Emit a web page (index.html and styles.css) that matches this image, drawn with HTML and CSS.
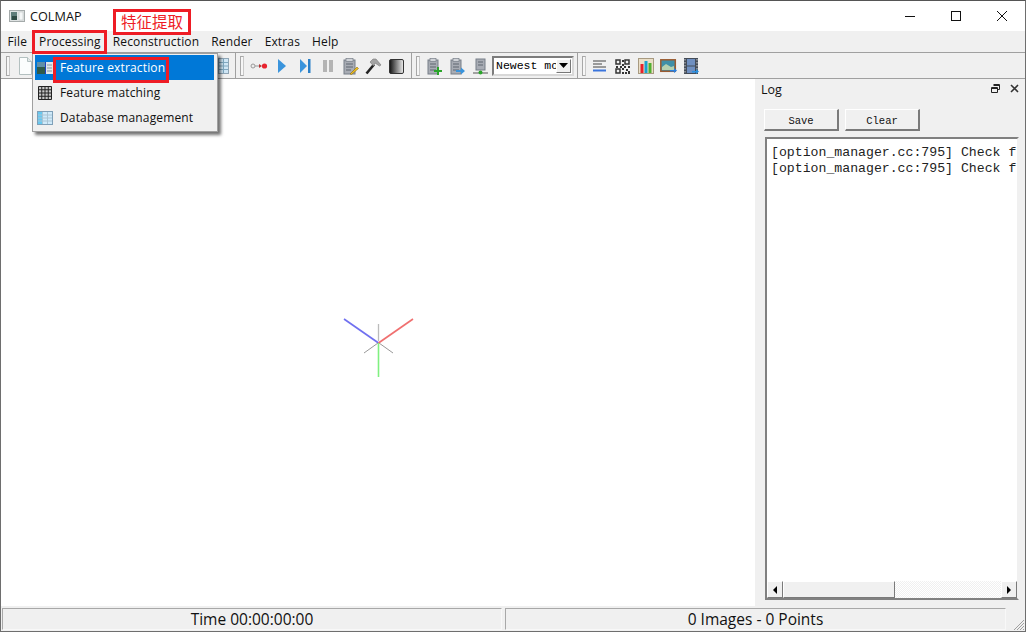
FILE: index.html
```html
<!DOCTYPE html>
<html lang="en">
<head>
<meta charset="utf-8">
<title>COLMAP</title>
<link rel="stylesheet" href="styles.css">
</head>
<body>
<div class="window">
  <header class="titlebar">
    <svg class="app-icon" width="16" height="12" viewBox="0 0 16 12"><rect x="0.500" y="0.500" width="15" height="11" fill="#dfe3e3" stroke="#a4aaaa"/><rect x="2" y="2" width="6" height="8" fill="#5f7d7a"/><rect x="3" y="6" width="5" height="4" fill="#2f4a44"/><rect x="10" y="2" width="4" height="8" fill="#f4f6f6" stroke="#b7bcbc" stroke-width="0.500"/></svg>
    <span class="app-name">COLMAP</span>
    <div class="win-controls">
      <svg width="46" height="31" viewBox="0 0 46 31"><path d="M18 15.500h10" stroke="#111" fill="none"/></svg>
      <svg width="46" height="31" viewBox="0 0 46 31"><rect x="18.500" y="10.500" width="9" height="9" stroke="#111" fill="none"/></svg>
      <svg width="46" height="31" viewBox="0 0 46 31"><path d="M18 10l10 10M28 10l-10 10" stroke="#111" fill="none"/></svg>
    </div>
  </header>
  <nav class="menubar">
    <span class="menu-item">File</span>
    <span class="menu-item">Processing</span>
    <span class="menu-item">Reconstruction</span>
    <span class="menu-item">Render</span>
    <span class="menu-item">Extras</span>
    <span class="menu-item">Help</span>
  </nav>
  <div class="toolbar">
    <i class="handle first"></i>
    <span class="tool"><svg width="14" height="18" viewBox="0 0 14 18"><path d="M1.500.5h8l4 4v13h-12z" fill="#fbfdfd" stroke="#b3c0c0"/><path d="M9.500.5v4h4" fill="#e2e8e8" stroke="#b3c0c0"/></svg></span>
    <span class="hidden-tools"></span>
    <span class="tool"><svg width="16" height="16" viewBox="0 0 16 16"><rect x=".5" y=".5" width="15" height="15" fill="#cfe6f5" stroke="#8fa5b5"/><path d="M1 4.500h14M1 8h14M1 11.500h14M5.500 1v14M10.500 1v14" stroke="#7fa8c0"/></svg></span>
    <i class="sep"></i><i class="handle"></i>
    <span class="tool"><svg width="18" height="8" viewBox="0 0 18 8"><circle cx="3" cy="4" r="2" fill="#eee" stroke="#999"/><path d="M5 4h5" stroke="#999"/><path d="M9 2l3 2-3 2z" fill="#b33"/><circle cx="14.500" cy="4" r="2.600" fill="#e8232e"/></svg></span>
    <span class="tool"><svg width="10" height="14" viewBox="0 0 10 14"><path d="M1 0l8 7-8 7z" fill="#3a94dc"/></svg></span>
    <span class="tool"><svg width="12" height="14" viewBox="0 0 12 14"><path d="M1 0l7 7-7 7z" fill="#3a94dc"/><rect x="9" y="0" width="2.500" height="14" fill="#2a80c8"/></svg></span>
    <span class="tool"><svg width="10" height="12" viewBox="0 0 10 12"><rect width="4" height="12" fill="#b4b4b4"/><rect x="6" width="4" height="12" fill="#b4b4b4"/></svg></span>
    <span class="tool"><svg width="16" height="17" viewBox="0 0 16 17"><rect x="1" y="2" width="11" height="14" fill="#a8acb4" stroke="#777e88"/><rect x="3" y="0.500" width="7" height="3" fill="#d0d3d8" stroke="#777e88" stroke-width=".7"/><path d="M3 6h7M3 9h7M3 12h5" stroke="#5f6670"/><path d="M7 16l7-7 1.500 1.500-7 6z" fill="#f0c020" stroke="#7a5a00" stroke-width=".5"/></svg></span>
    <span class="tool"><svg width="17" height="17" viewBox="0 0 17 17"><path d="M1.500 15.500L9 6.500" stroke="#222" stroke-width="2.600"/><path d="M5 4l3-3h3l5 6-1.500 1L10 5 8.500 8z" fill="#a4a4a4" stroke="#777" stroke-width=".6"/></svg></span>
    <span class="tool"><svg width="15" height="15" viewBox="0 0 15 15"><defs><linearGradient id="g"><stop offset="0" stop-color="#111"/><stop offset="1" stop-color="#eee"/></linearGradient></defs><rect x=".5" y=".5" width="14" height="14" rx="1.500" fill="url(#g)" stroke="#333"/></svg></span>
    <i class="sep"></i><i class="handle"></i>
    <span class="tool"><svg width="15" height="17" viewBox="0 0 15 17"><rect x="1" y="2" width="10" height="14" fill="#a8acb4" stroke="#777e88"/><rect x="3" y="0.500" width="6" height="3" fill="#d0d3d8" stroke="#777e88" stroke-width=".7"/><path d="M3 6h6M3 9h6M3 12h6" stroke="#5f6670"/><path d="M10 9h2v3h3v2h-3v3h-2v-3H7v-2h3z" fill="#2aa52a"/></svg></span>
    <span class="tool"><svg width="15" height="17" viewBox="0 0 15 17"><rect x="1" y="2" width="10" height="14" fill="#a8acb4" stroke="#777e88"/><rect x="3" y="0.500" width="6" height="3" fill="#d0d3d8" stroke="#777e88" stroke-width=".7"/><path d="M3 6h6M3 9h6M3 12h6" stroke="#5f6670"/><path d="M6 12h5V9.500l4 3.500-4 3.500V14H6z" fill="#3a94dc"/></svg></span>
    <span class="tool"><svg width="15" height="17" viewBox="0 0 15 17"><rect x="3" y="1" width="9" height="11" fill="#a8acb4" stroke="#777e88"/><path d="M5 4h5M5 7h5" stroke="#5f6670"/><path d="M0 15h15" stroke="#555"/><circle cx="7.500" cy="14.500" r="2" fill="#2aa52a"/></svg></span>
    <span class="combo"><span class="combo-text">Newest mo</span><span class="combo-btn"><svg width="9" height="5" viewBox="0 0 9 5"><path d="M0 0h9L4.500 5z" fill="#000"/></svg></span></span>
    <i class="sep"></i><i class="handle tight"></i>
    <span class="tool"><svg width="13" height="12" viewBox="0 0 13 12"><path d="M0 1h13M0 4h9M0 7h13" stroke="#444"/><path d="M0 10.500h13" stroke="#3a74dc" stroke-width="2"/></svg></span>
    <span class="tool"><svg width="15" height="15" viewBox="0 0 15 15"><path d="M1 1h4v4H1zM10 1h4v4h-4zM1 10h4v4H1z" fill="none" stroke="#333" stroke-width="1.500"/><path d="M7 1h2v2H7zM7 5h2v2H7zM1 7h2v2H1zM5 7h2v2H5zM9 7h2v2H9zM13 7h2v2h-2zM7 9h2v2H7zM11 10h2v2h-2zM7 13h2v2H7zM10 13h2v2h-2zM13 12h2v3h-2z" fill="#333"/></svg></span>
    <span class="tool"><svg width="16" height="16" viewBox="0 0 16 16"><rect x=".5" y=".5" width="15" height="15" fill="#eadfc8" stroke="#a89a80"/><rect x="2.500" y="6" width="3" height="9" fill="#e8202a"/><rect x="6.500" y="3" width="3" height="12" fill="#18a0d0"/><rect x="10.500" y="5" width="3" height="10" fill="#50b030"/></svg></span>
    <span class="tool"><svg width="17" height="14" viewBox="0 0 17 14"><rect x=".8" y=".8" width="14.500" height="11.500" fill="#3f8fa8" stroke="#9a5a30" stroke-width="1.500"/><path d="M2 8l4-3 5 3 3-1v4H2z" fill="#b5d0b0"/><path d="M10 11h4V9l3 2.500-3 2.500v-1.500h-4z" fill="#2a80e0"/></svg></span>
    <span class="tool"><svg width="15" height="17" viewBox="0 0 15 17"><rect x="0" y="0" width="14" height="16" fill="#444c58"/><rect x="3" y="1" width="8" height="6.500" fill="#6f8fc0"/><rect x="3" y="8.500" width="8" height="6.500" fill="#6f8fc0"/><path d="M1 1v14M13 1v14" stroke="#ccc" stroke-dasharray="1.500 1.500"/><path d="M8 13h4v-2l3 2.500-3 2.500v-1.500H8z" fill="#2a90e0"/></svg></span>
  </div>
  <main class="workspace">
    <section class="canvas">
      <svg class="axes" width="72" height="62" viewBox="0 0 72 62">
        <path d="M36.500 9v17" stroke="#bbb" stroke-width="1.300" fill="none"/>
        <path d="M36 28L22 38M37 28l14 10" stroke="#999" stroke-width="1" fill="none"/>
        <path d="M2 4l34.500 24" stroke="#7070f0" stroke-width="1.600" fill="none"/>
        <path d="M71 4L36.500 28" stroke="#f07070" stroke-width="1.600" fill="none"/>
        <path d="M36.500 28v34" stroke="#80f080" stroke-width="1.600" fill="none"/>
      </svg>
    </section>
    <aside class="dock">
      <div class="dock-head">
        <span class="dock-title">Log</span>
        <svg class="dock-float" width="9" height="9" viewBox="0 0 9 9"><path d="M2.500.5h6v5h-2M.5 3.500h6v5h-6z" fill="#f0f0f0" stroke="#222"/><path d="M2.500 1.500h6M.5 4.500h6" stroke="#222"/></svg>
        <svg class="dock-close" width="9" height="9" viewBox="0 0 9 9"><path d="M1 1l7 7M8 1L1 8" stroke="#333" stroke-width="1.600"/></svg>
      </div>
      <div class="dock-actions">
        <span class="btn">Save</span>
        <span class="btn">Clear</span>
      </div>
      <div class="logbox">
        <div class="logtext">
          <div>[option_manager.cc:795] Check f</div>
          <div>[option_manager.cc:795] Check f</div>
        </div>
        <div class="hscroll">
          <span class="arrow"><svg width="4" height="8" viewBox="0 0 4 8"><path d="M4 0v8L0 4z" fill="#000"/></svg></span>
          <span class="thumb"></span>
          <span class="track"></span>
          <span class="arrow"><svg width="4" height="8" viewBox="0 0 4 8"><path d="M0 0v8l4-4z" fill="#000"/></svg></span>
        </div>
      </div>
    </aside>
  </main>
  <footer class="statusbar">
    <div class="cell time">Time 00:00:00:00</div>
    <div class="cell stats">0 Images - 0 Points</div>
    <svg class="grip" width="14" height="14" viewBox="0 0 14 14"><path d="M13 3L3 13M13 6l-7 7M13 9l-4 4M13 12l-1 1" stroke="#a0a0a0"/></svg>
  </footer>

  <div class="dropdown">
    <div class="dd-item active"><svg width="16" height="12" viewBox="0 0 16 12"><rect width="16" height="12" fill="#dfe6ea"/><rect x="0" y="0" width="8" height="5" fill="#5f8fa8"/><rect x="0" y="5" width="8" height="7" fill="#2f5a4a"/><path d="M10 3h5M10 6h5M10 9h5" stroke="#8a9aa0"/><path d="M8.500 0v12" stroke="#2040c0"/></svg><span>Feature extraction</span></div>
    <div class="dd-item"><svg width="14" height="14" viewBox="0 0 14 14"><path d="M.5.5h13v13H.5zM.5 3.750h13M.5 7h13M.5 10.250h13M3.750.5v13M7 .5v13M10.250.5v13" fill="#c8c8c8" stroke="#222"/></svg><span>Feature matching</span></div>
    <div class="dd-item"><svg width="16" height="14" viewBox="0 0 16 14"><rect x=".5" y=".5" width="15" height="13" fill="#cfeafa" stroke="#7fa0b8"/><rect x="1" y="1" width="4" height="12" fill="#66c8f0"/><path d="M1 4h14M1 7h14M1 10h14M5.500 1v12M10.500 1v12" stroke="#a9c4d4"/></svg><span>Database management</span></div>
  </div>
  <div class="mark mark-menu"></div>
  <div class="mark mark-item"></div>
  <div class="mark mark-label">特征提取</div>
</div>
</body>
</html>
```
FILE: styles.css
```css
* { box-sizing: border-box; }
html, body { margin: 0; height: 100%; overflow: hidden; }
body { font-family: "Open Sans", "Noto Sans", sans-serif; font-size: 12px; color: #111; }

.window {
  position: relative;
  width: 1026px;
  height: 632px;
  display: flex;
  flex-direction: column;
  background: #f0f0f0;
  border: 1px solid #6e6e6e;
  border-top-color: #555;
}

.titlebar {
  height: 30px;
  flex: none;
  display: flex;
  align-items: center;
  background: #fff;
  padding-left: 8px;
}
.app-icon { margin-right: 5px; }
.app-name { font-size: 12.700px; padding-bottom: 1px; }
.win-controls { margin-left: auto; display: flex; }

.menubar {
  height: 22px;
  flex: none;
  display: flex;
  align-items: center;
  padding: 1px 0 0 .5px;
  background: #f0f0f0;
  border-bottom: 1px solid #a0a0a0;
}
.menu-item { padding: 0 6px; font-size: 12px; line-height: 20px; letter-spacing: .15px; }

.toolbar {
  height: 26px;
  flex: none;
  display: flex;
  align-items: center;
  padding: 1px 0 0 5px;
  background: #f0f0f0;
  border-bottom: 1px solid #a0a0a0;
}
.handle {
  flex: none;
  width: 4px;
  height: 20px;
  border: 1px solid #a8a8a8;
  border-right-color: #c8c8c8;
  background: #f6f6f6;
  margin-right: 3px;
}
.handle.tight { margin-right: 2px; }
.sep { flex: none; width: 1px; height: 25px; margin: -1px 4px 0 3px; background: #a0a0a0; }
.tool { flex: none; width: 23px; display: flex; justify-content: center; align-items: center; height: 24px; }
.hidden-tools { flex: none; width: 173px; }
.combo {
  flex: none;
  width: 82px;
  height: 20px;
  margin-top: -1px;
  display: flex;
  align-items: center;
  background: #fff;
  border: 2px solid #7c7c7c;
  border-right-color: #d8d8d8;
  border-bottom-color: #d8d8d8;
}
.combo-text {
  flex: none;
  width: 62px;
  overflow: hidden;
  white-space: nowrap;
  font: 11.500px "Liberation Mono", monospace;
  padding-left: 2px;
  color: #000;
}
.combo-btn {
  flex: none;
  width: 15px;
  height: 14px;
  display: flex;
  align-items: center;
  justify-content: center;
  background: #f0f0f0;
  border: 1px solid #777;
  border-top-color: #fff;
  border-left-color: #fff;
}

.workspace { flex: 1; min-height: 0; display: flex; }
.canvas {
  flex: 1;
  background: #fff;
  display: flex;
  justify-content: flex-start;
  align-items: flex-start;
  padding: 236px 0 0 340.500px;
}
.dock {
  flex: none;
  width: 270px;
  display: flex;
  flex-direction: column;
  padding: 0 6px 6px 9px;
  background: #f0f0f0;
}
.dock-head {
  height: 30px;
  flex: none;
  display: flex;
  align-items: flex-start;
  padding-top: 2px;
  font-size: 12.500px;
  margin: 0 -3px;
}
.dock-title { flex: 1; }
.dock-float { margin: 3px 10px 0 0; }
.dock-close { margin: 3px 3px 0 0; }
.dock-actions { flex: none; display: flex; gap: 6px; margin-bottom: 6px; }
.btn {
  width: 75px;
  height: 22px;
  display: flex;
  align-items: center;
  justify-content: center;
  padding-top: 3px;
  font: 10.500px "Liberation Mono", monospace;
  background: #f0f0f0;
  border: 1px solid #fff;
  border-right: 2px solid #7a7a7a;
  border-bottom: 2px solid #7a7a7a;
}
.logbox {
  flex: 1;
  min-height: 0;
  display: flex;
  flex-direction: column;
  background: #fff;
  border: 2px solid #808080;
  border-right-color: #f0f0f0;
  border-bottom-color: #808080;
  margin-left: 1px;
}
.logtext {
  flex: 1;
  overflow: hidden;
  white-space: nowrap;
  padding: 6px 0 0 4px;
  font: 13.200px/16px "Liberation Mono", monospace;
  color: #222;
}
.hscroll { flex: none; height: 17px; display: flex; background: #f4f4f4; }
.arrow {
  flex: none;
  width: 16px;
  display: flex;
  align-items: center;
  justify-content: center;
  background: #f0f0f0;
  border: 1px solid #fff;
  border-right-color: #7a7a7a;
  border-bottom-color: #7a7a7a;
}
.thumb {
  flex: none;
  width: 112px;
  background: #f0f0f0;
  border: 1px solid #fff;
  border-right-color: #7a7a7a;
  border-bottom-color: #7a7a7a;
}
.track { flex: 1; background: repeating-conic-gradient(#f0f0f0 0 25%, #fff 0 50%) 0 0 / 2px 2px; }

.statusbar {
  height: 25px;
  flex: none;
  display: flex;
  gap: 3px;
  padding: 2px 0 1px 1px;
  background: #f0f0f0;
  position: relative;
}
.cell {
  display: flex;
  align-items: center;
  justify-content: center;
  font-size: 15.500px;
  border: 1px solid #a8a8a8;
  border-right-color: #f8f8f8;
  border-bottom-color: #f8f8f8;
}
.time { width: 500px; }
.stats { width: 501px; }
.grip { position: absolute; right: 0; bottom: 0; }

.dropdown {
  position: absolute;
  left: 31px;
  top: 52px;
  width: 186px;
  height: 79px;
  padding: 1px 3px 1px 2px;
  background: #f0f0f0;
  border: 1px solid #a0a0a0;
  box-shadow: 3px 3px 3px rgba(0, 0, 0, .55);
}
.dd-item { height: 25px; display: flex; align-items: center; font-size: 12px; letter-spacing: .15px; }
.dd-item svg { flex: none; width: 16px; margin: 0 7px 0 2px; }
.dd-item span { white-space: nowrap; }
.dd-item.active { background: #0078d7; color: #fff; }

.mark { position: absolute; border: 3px solid #ee1c25; }
.mark-menu { left: 31px; top: 29px; width: 75px; height: 24px; }
.mark-item { left: 52px; top: 56px; width: 116px; height: 26px; }
.mark-label {
  left: 112px;
  top: 8px;
  width: 78px;
  height: 26px;
  display: flex;
  align-items: center;
  justify-content: center;
  padding-bottom: 3px;
  color: #ee1c25;
  font: 15.500px "Noto Sans CJK SC", sans-serif;
  background: #fff;
}
```
